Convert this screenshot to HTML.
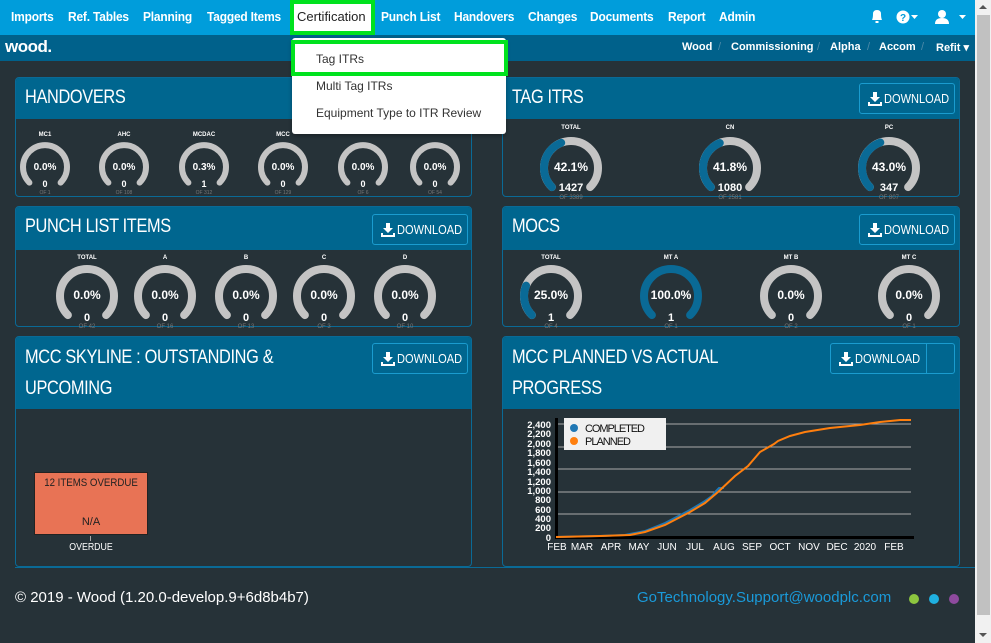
<!DOCTYPE html>
<html><head><meta charset="utf-8"><style>
*{margin:0;padding:0;box-sizing:border-box}
body{width:991px;height:643px;overflow:hidden;background:#263238;font-family:"Liberation Sans",sans-serif;position:relative}
.abs{position:absolute}
.nav{left:0;top:0;width:975px;height:35px;background:#009ddb}
.nv{position:absolute;top:9px;color:#fff;font-size:13px;font-weight:bold;letter-spacing:-0.2px;transform:scaleX(0.92);transform-origin:left}
.sub{left:0;top:35px;width:975px;height:26px;background:#00618b}
.bc{position:absolute;top:41px;color:#fff;font-size:11px;font-weight:bold}
.sep{position:absolute;top:41px;color:#4d8aa8;font-size:11px}
.panel{position:absolute;border:1px solid #0a6a96;border-radius:4px;background:#263238;overflow:hidden}
.ph{position:absolute;left:0;top:0;right:0;background:#00668f}
.pt{position:absolute;left:9px;color:#fff;font-size:19px;letter-spacing:-0.4px;transform:scaleX(0.86);transform-origin:left}
.btn{position:absolute;border:1px solid #1a9ccf;border-radius:3px;color:#fff;font-size:13px;height:31px;line-height:29px;padding-left:24px;width:96px}
.btn .t{display:inline-block;transform:scaleX(0.85);transform-origin:left;letter-spacing:0}
.btn svg{position:absolute;left:8px;top:8px}
.scroll{left:975px;top:0;width:16px;height:643px;background:#f1f1f1}
</style></head><body>
<div class="abs nav"></div>
<span class="nv" style="left:11px">Imports</span>
<span class="nv" style="left:68px">Ref. Tables</span>
<span class="nv" style="left:143px">Planning</span>
<span class="nv" style="left:207px">Tagged Items</span>
<div class="abs" style="left:290px;top:0;width:85px;height:35px;background:#fff;border:4px solid #00e21e"></div>
<span class="abs" style="top:9px;left:297px;color:#222;font-size:13px">Certification</span>
<span class="nv" style="left:381px">Punch List</span>
<span class="nv" style="left:454px">Handovers</span>
<span class="nv" style="left:528px">Changes</span>
<span class="nv" style="left:590px">Documents</span>
<span class="nv" style="left:668px">Report</span>
<span class="nv" style="left:719px">Admin</span>
<svg class="abs" style="left:868px;top:7px" width="100" height="20" viewBox="0 0 100 20">
<path d="M4 13 Q5 11 5 7 Q5 3 9 3 Q13 3 13 7 Q13 11 14 13 Z" fill="#fff"/><rect x="7.5" y="14" width="3" height="2" fill="#fff"/>
<circle cx="35" cy="10" r="6.5" fill="#fff"/><text x="35" y="14" text-anchor="middle" font-size="10" font-weight="bold" fill="#009ddb" font-family="Liberation Sans">?</text>
<path d="M43 8 L50 8 L46.5 12 Z" fill="#fff"/>
<circle cx="74" cy="7" r="4" fill="#fff"/><path d="M67 17 Q67 11 74 11 Q81 11 81 17 Z" fill="#fff"/>
<path d="M91 8 L98 8 L94.5 12 Z" fill="#fff"/>
</svg>
<div class="abs sub"></div>
<span class="abs" style="left:5px;top:37px;color:#fff;font-size:17px;font-weight:bold;letter-spacing:-0.5px">wood.</span>
<span class="bc" style="left:682px">Wood</span><span class="sep" style="left:718px">/</span>
<span class="bc" style="left:731px">Commissioning</span><span class="sep" style="left:817px">/</span>
<span class="bc" style="left:830px">Alpha</span><span class="sep" style="left:867px">/</span>
<span class="bc" style="left:879px">Accom</span><span class="sep" style="left:921px">/</span>
<span class="bc" style="left:936px">Refit ▾</span>

<div class="panel" style="left:15px;top:77px;width:457px;height:120px"><div class="ph" style="height:41px"></div><div class="pt" style="top:9px">HANDOVERS</div></div>
<div class="panel" style="left:502px;top:77px;width:458px;height:120px"><div class="ph" style="height:41px"></div><div class="pt" style="top:9px">TAG ITRS</div>
<div class="btn" style="left:356px;top:5px"><svg width="14" height="14" viewBox="0 0 14 14"><path d="M5 0h4v5h3l-5 5-5-5h3z M0 10h2v2h10v-2h2v4H0z" fill="#fff"/></svg><span class="t">DOWNLOAD</span></div></div>
<div class="panel" style="left:15px;top:206px;width:457px;height:121px"><div class="ph" style="height:43px"></div><div class="pt" style="top:9px">PUNCH LIST ITEMS</div>
<div class="btn" style="left:356px;top:7px"><svg width="14" height="14" viewBox="0 0 14 14"><path d="M5 0h4v5h3l-5 5-5-5h3z M0 10h2v2h10v-2h2v4H0z" fill="#fff"/></svg><span class="t">DOWNLOAD</span></div></div>
<div class="panel" style="left:502px;top:206px;width:458px;height:121px"><div class="ph" style="height:43px"></div><div class="pt" style="top:9px">MOCS</div>
<div class="btn" style="left:356px;top:7px"><svg width="14" height="14" viewBox="0 0 14 14"><path d="M5 0h4v5h3l-5 5-5-5h3z M0 10h2v2h10v-2h2v4H0z" fill="#fff"/></svg><span class="t">DOWNLOAD</span></div></div>
<div class="panel" style="left:15px;top:336px;width:457px;height:231px"><div class="ph" style="height:72px"></div><div class="pt" style="top:5px;line-height:31px">MCC SKYLINE : OUTSTANDING &amp;<br>UPCOMING</div>
<div class="btn" style="left:356px;top:6px"><svg width="14" height="14" viewBox="0 0 14 14"><path d="M5 0h4v5h3l-5 5-5-5h3z M0 10h2v2h10v-2h2v4H0z" fill="#fff"/></svg><span class="t">DOWNLOAD</span></div>
<div class="abs" style="left:18px;top:135px;width:114px;height:63px;background:#e87355;border:1px solid #222"></div>
<div class="abs" style="left:18px;top:140px;width:114px;text-align:center;font-size:11px;color:#222;transform:scaleX(0.88)">12 ITEMS OVERDUE</div>
<div class="abs" style="left:18px;top:179px;width:114px;text-align:center;font-size:11px;color:#222">N/A</div>
<div class="abs" style="left:74px;top:199px;width:1px;height:5px;background:#aaa"></div>
<div class="abs" style="left:18px;top:205px;width:114px;text-align:center;font-size:10px;color:#fff;transform:scaleX(0.88)">OVERDUE</div>
</div>
<div class="panel" style="left:502px;top:336px;width:458px;height:231px"><div class="ph" style="height:72px"></div><div class="pt" style="top:5px;line-height:31px">MCC PLANNED VS ACTUAL<br>PROGRESS</div>
<div class="btn" style="left:327px;top:6px;width:125px"><svg width="14" height="14" viewBox="0 0 14 14"><path d="M5 0h4v5h3l-5 5-5-5h3z M0 10h2v2h10v-2h2v4H0z" fill="#fff"/></svg><span class="t">DOWNLOAD</span><div class="abs" style="left:95px;top:0;width:1px;height:29px;background:#1a9ccf"></div></div>
</div>
<div class="abs" style="left:15px;top:567px;width:960px;height:1px;background:#0a6a96"></div>

<svg class="abs" style="left:0;top:0" width="991" height="643" viewBox="0 0 991 643" font-family="Liberation Sans" text-anchor="middle">
<defs>
<path id="gs" d="M-15.6 15.6 A22 22 0 1 1 15.6 15.6" fill="none" stroke="#c4c4c4" stroke-width="6" stroke-linecap="round"/>
<path id="gl" d="M-19.1 19.1 A27 27 0 1 1 19.1 19.1" fill="none" stroke="#c4c4c4" stroke-width="8" stroke-linecap="round"/>
</defs>
<g font-weight="bold" fill="#fff">
<g transform="translate(45,167)"><use href="#gs"/><text y="-31" font-size="6">MC1</text><text y="3" font-size="10">0.0%</text><text y="20" font-size="9">0</text><text y="27" font-size="5" fill="#777" font-weight="normal">OF 1</text></g>
<g transform="translate(124,167)"><use href="#gs"/><text y="-31" font-size="6">AHC</text><text y="3" font-size="10">0.0%</text><text y="20" font-size="9">0</text><text y="27" font-size="5" fill="#777" font-weight="normal">OF 108</text></g>
<g transform="translate(204,167)"><use href="#gs"/><text y="-31" font-size="6">MCDAC</text><text y="3" font-size="10">0.3%</text><text y="20" font-size="9">1</text><text y="27" font-size="5" fill="#777" font-weight="normal">OF 312</text></g>
<g transform="translate(283,167)"><use href="#gs"/><text y="-31" font-size="6">MCC</text><text y="3" font-size="10">0.0%</text><text y="20" font-size="9">0</text><text y="27" font-size="5" fill="#777" font-weight="normal">OF 129</text></g>
<g transform="translate(363,167)"><use href="#gs"/><text y="3" font-size="10">0.0%</text><text y="20" font-size="9">0</text><text y="27" font-size="5" fill="#777" font-weight="normal">OF 6</text></g>
<g transform="translate(435,167)"><use href="#gs"/><text y="3" font-size="10">0.0%</text><text y="20" font-size="9">0</text><text y="27" font-size="5" fill="#777" font-weight="normal">OF 54</text></g>
<g transform="translate(571,168)"><use href="#gl"/><path d="M-19.1 19.1 A27 27 0 0 1 -9.8 -25.2" fill="none" stroke="#0a6a96" stroke-width="8" stroke-linecap="round"/><text y="3" font-size="12">42.1%</text><text y="23" font-size="11">1427</text><text y="31" font-size="6" fill="#777" font-weight="normal">OF 3389</text><text y="-39" font-size="6">TOTAL</text></g>
<g transform="translate(730,168)"><use href="#gl"/><path d="M-19.1 19.1 A27 27 0 0 1 -10.2 -25.0" fill="none" stroke="#0a6a96" stroke-width="8" stroke-linecap="round"/><text y="3" font-size="12">41.8%</text><text y="23" font-size="11">1080</text><text y="31" font-size="6" fill="#777" font-weight="normal">OF 2581</text><text y="-39" font-size="6">CN</text></g>
<g transform="translate(889,168)"><use href="#gl"/><path d="M-19.1 19.1 A27 27 0 0 1 -8.7 -25.5" fill="none" stroke="#0a6a96" stroke-width="8" stroke-linecap="round"/><text y="3" font-size="12">43.0%</text><text y="23" font-size="11">347</text><text y="31" font-size="6" fill="#777" font-weight="normal">OF 807</text><text y="-39" font-size="6">PC</text></g>
<g transform="translate(87,296)"><use href="#gl"/><text y="-37" font-size="6">TOTAL</text><text y="3" font-size="12">0.0%</text><text y="25" font-size="11">0</text><text y="32" font-size="6" fill="#777" font-weight="normal">OF 42</text></g>
<g transform="translate(165,296)"><use href="#gl"/><text y="-37" font-size="6">A</text><text y="3" font-size="12">0.0%</text><text y="25" font-size="11">0</text><text y="32" font-size="6" fill="#777" font-weight="normal">OF 16</text></g>
<g transform="translate(246,296)"><use href="#gl"/><text y="-37" font-size="6">B</text><text y="3" font-size="12">0.0%</text><text y="25" font-size="11">0</text><text y="32" font-size="6" fill="#777" font-weight="normal">OF 13</text></g>
<g transform="translate(324,296)"><use href="#gl"/><text y="-37" font-size="6">C</text><text y="3" font-size="12">0.0%</text><text y="25" font-size="11">0</text><text y="32" font-size="6" fill="#777" font-weight="normal">OF 3</text></g>
<g transform="translate(405,296)"><use href="#gl"/><text y="-37" font-size="6">D</text><text y="3" font-size="12">0.0%</text><text y="25" font-size="11">0</text><text y="32" font-size="6" fill="#777" font-weight="normal">OF 10</text></g>
<g transform="translate(551,296)"><use href="#gl"/><path d="M-19.1 19.1 A27 27 0 0 1 -24.9 -10.3" fill="none" stroke="#0a6a96" stroke-width="8" stroke-linecap="round"/><text y="-37" font-size="6">TOTAL</text><text y="3" font-size="12">25.0%</text><text y="25" font-size="11">1</text><text y="32" font-size="6" fill="#777" font-weight="normal">OF 4</text></g>
<g transform="translate(671,296)"><path d="M-19.1 19.1 A27 27 0 1 1 19.1 19.1" fill="none" stroke="#0a6a96" stroke-width="8" stroke-linecap="round"/><text y="-37" font-size="6">MT A</text><text y="3" font-size="12">100.0%</text><text y="25" font-size="11">1</text><text y="32" font-size="6" fill="#777" font-weight="normal">OF 1</text></g>
<g transform="translate(791,296)"><use href="#gl"/><text y="-37" font-size="6">MT B</text><text y="3" font-size="12">0.0%</text><text y="25" font-size="11">0</text><text y="32" font-size="6" fill="#777" font-weight="normal">OF 2</text></g>
<g transform="translate(909,296)"><use href="#gl"/><text y="-37" font-size="6">MT C</text><text y="3" font-size="12">0.0%</text><text y="25" font-size="11">0</text><text y="32" font-size="6" fill="#777" font-weight="normal">OF 1</text></g>
</g>
<g stroke="#aaa" stroke-width="1">
<line x1="557" y1="424" x2="911" y2="424"/><line x1="557" y1="447" x2="911" y2="447"/><line x1="557" y1="469" x2="911" y2="469"/><line x1="557" y1="492" x2="911" y2="492"/><line x1="557" y1="514" x2="911" y2="514"/>
</g>
<line x1="556.5" y1="418" x2="556.5" y2="539" stroke="#000" stroke-width="3"/>
<line x1="555" y1="537.5" x2="914" y2="537.5" stroke="#000" stroke-width="3"/>
<g font-size="9.5" font-weight="bold" fill="#fff" text-anchor="end">
<text x="551" y="428">2,400</text><text x="551" y="437">2,200</text><text x="551" y="447">2,000</text><text x="551" y="456">1,800</text><text x="551" y="466">1,600</text><text x="551" y="475">1,400</text><text x="551" y="485">1,200</text><text x="551" y="494">1,000</text><text x="551" y="503">800</text><text x="551" y="513">600</text><text x="551" y="522">400</text><text x="551" y="531">200</text><text x="551" y="541">0</text>
</g>
<g font-size="10" fill="#fff" text-anchor="middle">
<text x="557" y="550">FEB</text><text x="582" y="550">MAR</text><text x="611" y="550">APR</text><text x="639" y="550">MAY</text><text x="667" y="550">JUN</text><text x="695" y="550">JUL</text><text x="724" y="550">AUG</text><text x="752" y="550">SEP</text><text x="780" y="550">OCT</text><text x="809" y="550">NOV</text><text x="837" y="550">DEC</text><text x="865" y="550">2020</text><text x="894" y="550">FEB</text>
</g>
<path d="M556 537 L600 536 L625 535 L645 531 L665 523 L690 510 L705 501 L712 496 L716 491 L719 488 L724 488" fill="none" stroke="#1f77b4" stroke-width="2"/>
<path d="M556 537 L600 536 L630 535 L645 532 L665 525 L690 512 L705 503 L718 492 L735 476 L748 466 L760 452 L774 444 L778 441 L790 436 L805 432 L830 428 L860 425 L880 422 L900 420 L911 420" fill="none" stroke="#ff7f0e" stroke-width="2"/>
<rect x="564" y="418" width="102" height="32" fill="#f0f0f0"/>
<circle cx="574" cy="428" r="4" fill="#1f77b4"/><circle cx="574" cy="441" r="4" fill="#ff7f0e"/>
<g font-size="11" fill="#111" text-anchor="start"><text x="585" y="432" textLength="60">COMPLETED</text><text x="585" y="445" textLength="46">PLANNED</text></g>
</svg>

<div class="abs" style="left:15px;top:589px;color:#fff;font-size:15px">© 2019 - Wood (1.20.0-develop.9+6d8b4b7)</div>
<div class="abs" style="left:637px;top:589px;color:#1a9ad9;font-size:15px">GoTechnology.Support@woodplc.com</div>
<div class="abs" style="left:909px;top:594px;width:10px;height:10px;border-radius:50%;background:#8dc63f"></div>
<div class="abs" style="left:929px;top:594px;width:10px;height:10px;border-radius:50%;background:#1fb0e0"></div>
<div class="abs" style="left:949px;top:594px;width:10px;height:10px;border-radius:50%;background:#8e4a9e"></div>

<div class="abs" style="left:292px;top:38px;width:214px;height:96px;background:#fff;border-radius:3px;box-shadow:0 2px 4px rgba(0,0,0,.3)"></div>
<div class="abs" style="left:291px;top:40px;width:217px;height:36px;border:4px solid #00e21e;background:#fff"></div>
<div class="abs" style="left:316px;top:52px;color:#333;font-size:12px">Tag ITRs</div>
<div class="abs" style="left:316px;top:79px;color:#333;font-size:12px">Multi Tag ITRs</div>
<div class="abs" style="left:316px;top:106px;color:#333;font-size:12px">Equipment Type to ITR Review</div>

<div class="abs scroll"></div>
<div class="abs" style="left:977px;top:15px;width:13px;height:600px;background:#c1c1c1"></div>
<div class="abs" style="left:979px;top:5px;width:0;height:0;border-left:4px solid transparent;border-right:4px solid transparent;border-bottom:4px solid #555"></div>
<div class="abs" style="left:979px;top:633px;width:0;height:0;border-left:4px solid transparent;border-right:4px solid transparent;border-top:4px solid #555"></div>
</body></html>
